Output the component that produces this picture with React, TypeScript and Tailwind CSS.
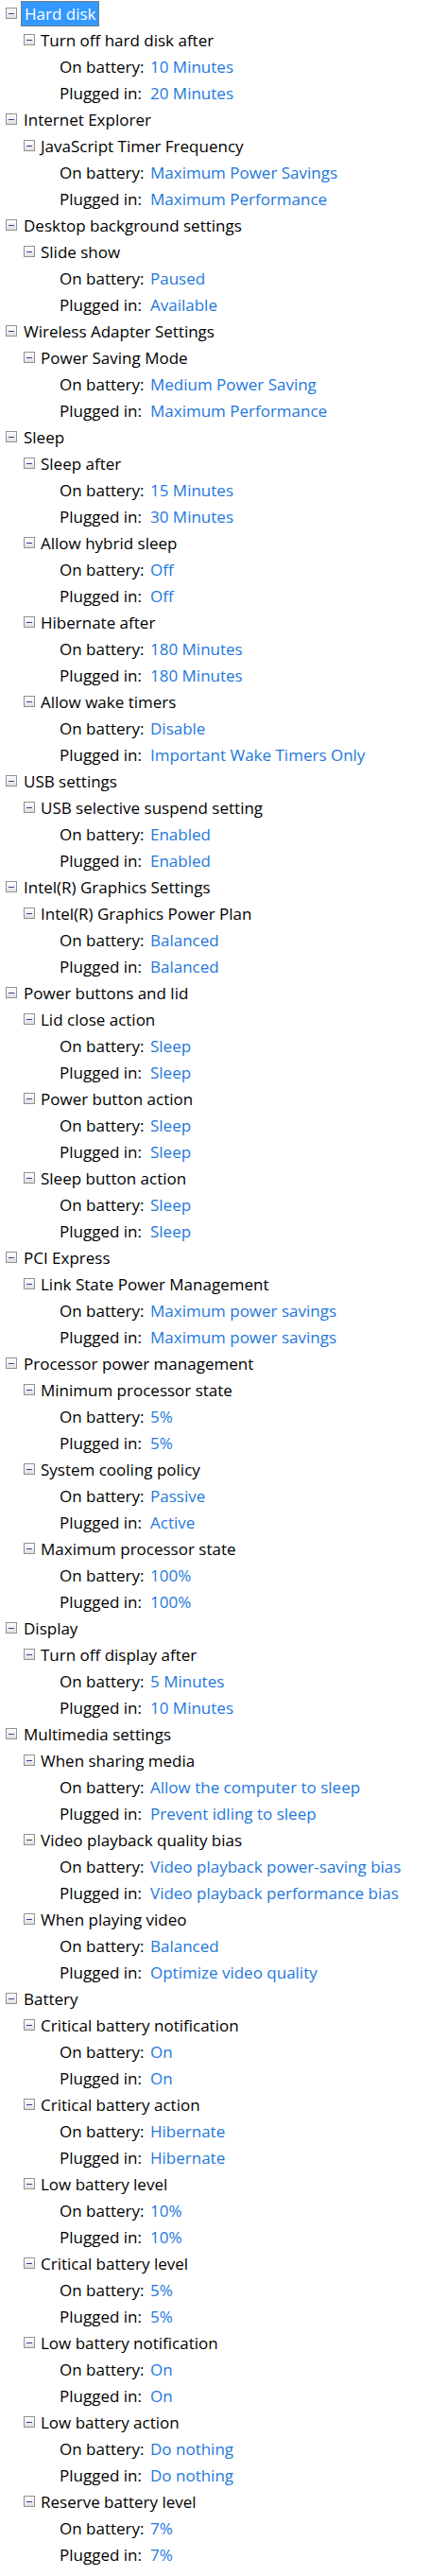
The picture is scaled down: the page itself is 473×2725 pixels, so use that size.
import React from "react";

type Setting = { name: string; battery: string; plugged: string };
type Group = { title: string; settings: Setting[] };

const groups: Group[] = [
    { title: "Hard disk", settings: [{ name: "Turn off hard disk after", battery: "10 Minutes", plugged: "20 Minutes" }] },
    {
        title: "Internet Explorer",
        settings: [{ name: "JavaScript Timer Frequency", battery: "Maximum Power Savings", plugged: "Maximum Performance" }],
    },
    { title: "Desktop background settings", settings: [{ name: "Slide show", battery: "Paused", plugged: "Available" }] },
    {
        title: "Wireless Adapter Settings",
        settings: [{ name: "Power Saving Mode", battery: "Medium Power Saving", plugged: "Maximum Performance" }],
    },
    {
        title: "Sleep",
        settings: [
            { name: "Sleep after", battery: "15 Minutes", plugged: "30 Minutes" },
            { name: "Allow hybrid sleep", battery: "Off", plugged: "Off" },
            { name: "Hibernate after", battery: "180 Minutes", plugged: "180 Minutes" },
            { name: "Allow wake timers", battery: "Disable", plugged: "Important Wake Timers Only" },
        ],
    },
    { title: "USB settings", settings: [{ name: "USB selective suspend setting", battery: "Enabled", plugged: "Enabled" }] },
    {
        title: "Intel(R) Graphics Settings",
        settings: [{ name: "Intel(R) Graphics Power Plan", battery: "Balanced", plugged: "Balanced" }],
    },
    {
        title: "Power buttons and lid",
        settings: [
            { name: "Lid close action", battery: "Sleep", plugged: "Sleep" },
            { name: "Power button action", battery: "Sleep", plugged: "Sleep" },
            { name: "Sleep button action", battery: "Sleep", plugged: "Sleep" },
        ],
    },
    {
        title: "PCI Express",
        settings: [
            { name: "Link State Power Management", battery: "Maximum power savings", plugged: "Maximum power savings" },
        ],
    },
    {
        title: "Processor power management",
        settings: [
            { name: "Minimum processor state", battery: "5%", plugged: "5%" },
            { name: "System cooling policy", battery: "Passive", plugged: "Active" },
            { name: "Maximum processor state", battery: "100%", plugged: "100%" },
        ],
    },
    { title: "Display", settings: [{ name: "Turn off display after", battery: "5 Minutes", plugged: "10 Minutes" }] },
    {
        title: "Multimedia settings",
        settings: [
            { name: "When sharing media", battery: "Allow the computer to sleep", plugged: "Prevent idling to sleep" },
            {
                name: "Video playback quality bias",
                battery: "Video playback power-saving bias",
                plugged: "Video playback performance bias",
            },
            { name: "When playing video", battery: "Balanced", plugged: "Optimize video quality" },
        ],
    },
    {
        title: "Battery",
        settings: [
            { name: "Critical battery notification", battery: "On", plugged: "On" },
            { name: "Critical battery action", battery: "Hibernate", plugged: "Hibernate" },
            { name: "Low battery level", battery: "10%", plugged: "10%" },
            { name: "Critical battery level", battery: "5%", plugged: "5%" },
            { name: "Low battery notification", battery: "On", plugged: "On" },
            { name: "Low battery action", battery: "Do nothing", plugged: "Do nothing" },
            { name: "Reserve battery level", battery: "7%", plugged: "7%" },
        ],
    },
];

// small "collapse" box like the old Windows tree view
function Toggle() {
    return (
        <span className="w-3 h-3 shrink-0 border border-[#919191] bg-gradient-to-b from-white to-[#e0e0e0] flex items-center justify-center">
            <span className="w-[6px] h-px bg-[#2b4a8a]" />
        </span>
    );
}

function ValueRow({ label, value }: { label: string; value: string }) {
    return (
        <div className="h-7 flex items-center pl-[63px]">
            <span className="w-[96px] shrink-0 text-black whitespace-nowrap">{label}</span>
            <span className="text-[#1e78dc] whitespace-nowrap">{value}</span>
        </div>
    );
}

export default function App() {
    return (
        <div className="bg-white w-[473px] min-h-[2725px] text-[17px] leading-none font-['Open_Sans',sans-serif]">
            {groups.map((group, gi) => (
                <div key={group.title}>
                    {/* Category */}
                    <div className="h-7 flex items-center pl-[6px]">
                        <Toggle />
                        <span
                            className={
                                gi === 0
                                    ? "ml-[4px] px-[3px] h-[27px] flex items-center bg-[#3399ff] text-white border border-dotted border-[#b06010]"
                                    : "ml-[7px] text-black"
                            }>
                            {group.title}
                        </span>
                    </div>

                    {group.settings.map((s) => (
                        <div key={s.name}>
                            {/* Setting */}
                            <div className="h-7 flex items-center pl-[25px]">
                                <Toggle />
                                <span className="ml-[6px] text-black whitespace-nowrap">{s.name}</span>
                            </div>
                            <ValueRow label="On battery:" value={s.battery} />
                            <ValueRow label="Plugged in:" value={s.plugged} />
                        </div>
                    ))}
                </div>
            ))}
        </div>
    );
}
